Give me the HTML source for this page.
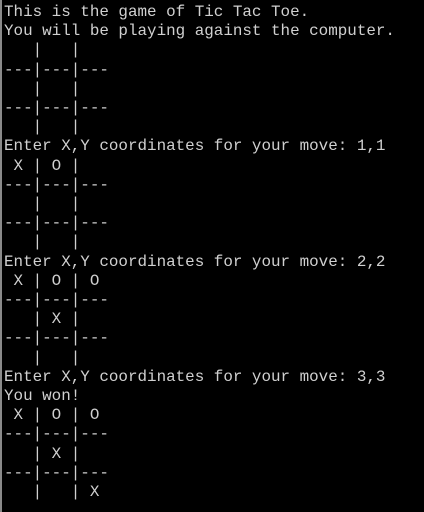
<!DOCTYPE html>
<html><head><style>
html,body{margin:0;padding:0;background:#000;width:424px;height:512px;overflow:hidden}
body{border-left:2px solid #8a8a8a;box-sizing:border-box}
pre{margin:0;padding:0 0 0 2px;position:relative;top:3px;font-family:"Liberation Mono",monospace;font-size:15.9px;line-height:19.2px;color:#d0d0d0;white-space:pre}
</style></head><body><pre>This is the game of Tic Tac Toe.
You will be playing against the computer.
   |   |
---|---|---
   |   |
---|---|---
   |   |
Enter X,Y coordinates for your move: 1,1
 X | O |
---|---|---
   |   |
---|---|---
   |   |
Enter X,Y coordinates for your move: 2,2
 X | O | O
---|---|---
   | X |
---|---|---
   |   |
Enter X,Y coordinates for your move: 3,3
You won!
 X | O | O
---|---|---
   | X |
---|---|---
   |   | X</pre></body></html>
